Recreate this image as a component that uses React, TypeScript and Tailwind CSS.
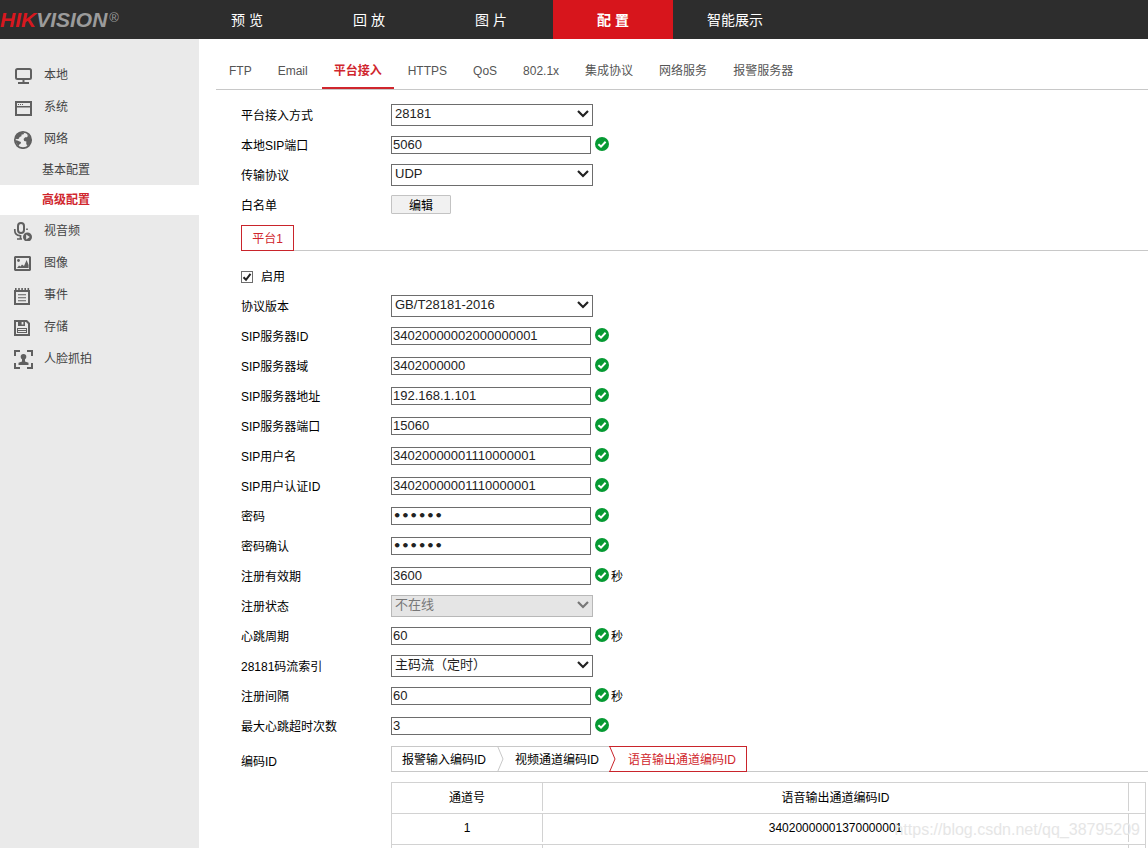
import { useState, type ReactNode } from "react";
import clsx from "clsx";

const navItems = ["预 览", "回 放", "图 片", "配 置", "智能展示"];

const tabs = [
  "FTP",
  "Email",
  "平台接入",
  "HTTPS",
  "QoS",
  "802.1x",
  "集成协议",
  "网络服务",
  "报警服务器",
];

const icons: Record<string, ReactNode> = {
  local: (
    <>
      <rect x="3" y="4" width="15" height="10" rx="1.5" fill="none" stroke="currentColor" strokeWidth="2" />
      <path d="M9.5 15h2v2h-2zM5 17h11v2H5z" />
    </>
  ),
  system: (
    <>
      <path d="M2 4h17v15H2zM4 6v3h13V6zM4 10.5V17h13v-6.5z" fillRule="evenodd" />
      <path d="M5 7h1v1H5zM7 7h1v1H7zM9 7h1v1H9z" />
    </>
  ),
  network: (
    <>
      <circle cx="10" cy="11" r="8.2" fill="none" stroke="currentColor" strokeWidth="1.7" />
      <path d="M3 7 5.5 3.8 9 2.8l2.2 1.4-1 1.2-1.6.2-.2 1.6-1.8.7-.8 1.8-2 .6-1.6-1zM2 11l2.4.4 2.2 1.2 1.4.4-.4 1.8-1.6 1-.2 1.4L3.6 15z" />
      <path d="M14 4.4 17.4 8l.8 3-1 3.8-3 2.2-1-2.4.2-2-2.2-.6-.6-2 1.6-1.8h1.8l.8-1.2z" />
    </>
  ),
  av: (
    <>
      <rect x="5" y="2" width="6" height="10" rx="3" fill="none" stroke="currentColor" strokeWidth="2" />
      <path d="M1.8 8v1.5c0 3 2.2 5 5.4 5.2M14 7.5v1.5M7.5 14v4M4 18h5" fill="none" stroke="currentColor" strokeWidth="1.7" />
      <circle cx="14.5" cy="16" r="4.5" />
      <path d="M13.2 13.6v4.8l3.6-2.4z" fill="#eaeaea" />
    </>
  ),
  image: (
    <>
      <path d="M2 3h15l1 1v13l-1 1H2l-1-1V4zM3 5v11h13V5z" fillRule="evenodd" />
      <circle cx="5.5" cy="7.5" r="1.4" />
      <path d="M4 15l2-2.5 1.5 1 1.5-2 2 1.5L13.6 7l2 5v3z" />
    </>
  ),
  event: (
    <>
      <path d="M1 5h16v15H1zM3 7v11h12V7z" fillRule="evenodd" />
      <path d="M2 3h1.6v2H2zM5.2 3h1.6v2H5.2zM8.3 3h1.6v2H8.3zM11.4 3H13v2h-1.6zM14.5 3h1.6v2h-1.6zM5 9.2h8v1H5zM5 12.2h8v1H5zM5 15.2h8v1H5z" />
    </>
  ),
  storage: (
    <>
      <path d="M1 3h13l3 3v13H1zM3 5v12h12V7l-2-2z" fillRule="evenodd" />
      <path d="M5 4h7v5H5zM8.6 5v2.6h1.8V5z" fillRule="evenodd" />
      <path d="M4 11h10v5H4zM5 12v1h8v-1zM5 14v1h8v-1z" fillRule="evenodd" />
    </>
  ),
  face: (
    <>
      <path d="M2 7V2h5M14 2h5v5M19 14v5h-5M7 19H2v-5" fill="none" stroke="currentColor" strokeWidth="2" />
      <circle cx="10.5" cy="7.8" r="2.8" />
      <path d="M9 9h3v3.5l3.5 1.3V16h-10v-2.2L9 12.5z" />
    </>
  ),
};

const sideItems = [
  { icon: "local", label: "本地" },
  { icon: "system", label: "系统" },
  { icon: "network", label: "网络", children: ["基本配置", "高级配置"] },
  { icon: "av", label: "视音频" },
  { icon: "image", label: "图像" },
  { icon: "event", label: "事件" },
  { icon: "storage", label: "存储" },
  { icon: "face", label: "人脸抓拍" },
];

type Field = {
  id: string;
  label: string;
  value: string;
  kind?: "select" | "password";
  disabled?: boolean;
  unit?: string;
};

const accessFields: Field[] = [
  { id: "mode", label: "平台接入方式", value: "28181", kind: "select" },
  { id: "localPort", label: "本地SIP端口", value: "5060" },
  { id: "transport", label: "传输协议", value: "UDP", kind: "select" },
];

const platformFields: Field[] = [
  { id: "version", label: "协议版本", value: "GB/T28181-2016", kind: "select" },
  { id: "serverId", label: "SIP服务器ID", value: "34020000002000000001" },
  { id: "serverDomain", label: "SIP服务器域", value: "3402000000" },
  { id: "serverAddr", label: "SIP服务器地址", value: "192.168.1.101" },
  { id: "serverPort", label: "SIP服务器端口", value: "15060" },
  { id: "user", label: "SIP用户名", value: "34020000001110000001" },
  { id: "authId", label: "SIP用户认证ID", value: "34020000001110000001" },
  { id: "password", label: "密码", value: "123456", kind: "password" },
  { id: "confirm", label: "密码确认", value: "123456", kind: "password" },
  { id: "expires", label: "注册有效期", value: "3600", unit: "秒" },
  { id: "status", label: "注册状态", value: "不在线", kind: "select", disabled: true },
  { id: "heartbeat", label: "心跳周期", value: "60", unit: "秒" },
  { id: "stream", label: "28181码流索引", value: "主码流（定时）", kind: "select" },
  { id: "interval", label: "注册间隔", value: "60", unit: "秒" },
  { id: "maxTimeout", label: "最大心跳超时次数", value: "3" },
];

function ValidMark() {
  return (
    <svg className="mb-0.5 ml-1 size-3.5 shrink-0" viewBox="0 0 14 14" aria-hidden="true">
      <circle cx="7" cy="7" r="7" fill="#069a33" />
      <path d="M3.4 7.2 6 9.6l4.6-4.8" fill="none" stroke="#fff" strokeWidth="2" />
    </svg>
  );
}

function SelectBox({ field }: { field: Field }) {
  return (
    <div className="relative">
      <select
        id={field.id}
        disabled={field.disabled}
        defaultValue={field.value}
        className={clsx(
          "block h-[22px] w-[202px] appearance-none rounded-none border pr-5 pb-0.5 pl-[3px] text-[13px] leading-[18px] opacity-100",
          field.disabled
            ? "border-[#b8b8b8] bg-[#e5e5e5] text-[#777]"
            : "border-[#6d6d6d] bg-white text-[#222]",
        )}
      >
        <option>{field.value}</option>
      </select>
      <svg
        className={clsx(
          "pointer-events-none absolute top-1.5 right-1 h-2 w-3",
          field.disabled ? "text-[#777]" : "text-[#222]",
        )}
        viewBox="0 0 12 8"
        aria-hidden="true"
      >
        <path d="M1 1l5 5 5-5" fill="none" stroke="currentColor" strokeWidth="2.2" />
      </svg>
    </div>
  );
}

function FieldRow({ field }: { field: Field }) {
  return (
    <div className="flex h-[30px] items-center">
      <label htmlFor={field.id} className="w-[150px] shrink-0 pt-0.5">
        {field.label}
      </label>
      {field.kind === "select" ? (
        <SelectBox field={field} />
      ) : (
        <>
          <input
            id={field.id}
            type={field.kind ?? "text"}
            defaultValue={field.value}
            className={clsx(
              "block h-[18px] w-[200px] border border-[#6d6d6d] bg-white px-px pb-0.5 text-[13px] text-[#222]",
              field.kind === "password" && "font-['DejaVu_Sans',sans-serif] font-bold",
            )}
          />
          <ValidMark />
          {field.unit && <span className="ml-0.5 pt-0.5">{field.unit}</span>}
        </>
      )}
    </div>
  );
}

function TabArrow({ active }: { active?: boolean }) {
  return (
    <svg className="h-[26px] w-[7px] shrink-0" viewBox="0 0 7 26" aria-hidden="true">
      {active ? (
        <path d="M7 .5H0M7 25.5H0" stroke="#c9242b" />
      ) : (
        <path d="M0 .5h7M0 25.5h7" stroke="#c8c8c8" />
      )}
      <path
        d="M.5 0 6 13 .5 26"
        fill="none"
        stroke={active ? "#c9242b" : "#c8c8c8"}
      />
    </svg>
  );
}

function Header() {
  return (
    <header className="flex h-[39px] shrink-0 bg-[#2d2d2d]">
      <a href="#home" className="flex w-[187px] items-center text-[21px] leading-none font-bold text-[#9b9b9b] italic">
        <span className="text-[#d7181f]">HIK</span>VISION
        <span className="ml-0.5 pb-1 text-[13px] font-normal not-italic">®</span>
      </a>
      <nav aria-label="主菜单" className="flex gap-0.5 text-[14px] text-white">
        {navItems.map((item) => (
          <a
            key={item}
            href="#nav"
            className={clsx(
              "flex w-[120px] items-center justify-center",
              item === "配 置" && "bg-[#d7151c] font-bold",
            )}
          >
            {item}
          </a>
        ))}
      </nav>
    </header>
  );
}

function Sidebar() {
  return (
    <aside className="w-[199px] shrink-0 bg-[#eaeaea] pt-5 text-[#444]">
      <ul>
        {sideItems.map((item) => (
          <li key={item.label}>
            <a href="#side" className="flex h-8 items-center gap-[11px] pl-[13px]">
              <svg className="size-5 text-[#606060]" viewBox="0 0 20 20" fill="currentColor" aria-hidden="true">
                {icons[item.icon]}
              </svg>
              {item.label}
            </a>
            {item.children?.map((child) => (
              <a
                key={child}
                href="#sub"
                className={clsx(
                  "flex h-[30px] items-center pl-[42px]",
                  child === "高级配置" && "bg-white font-bold text-[#d0262d]",
                )}
              >
                {child}
              </a>
            ))}
          </li>
        ))}
      </ul>
    </aside>
  );
}

function ChannelTable() {
  const cell = "h-[31px] border-b border-[#d2d2d2] p-0 pb-[2px] font-normal";
  const inner = "flex h-7 items-center justify-center border-r border-[#d2d2d2]";
  const rows = [
    ["1", "34020000001370000001"],
    ["", ""],
  ];
  return (
    <table className="w-full table-fixed border-separate border-spacing-0 border-t border-r border-l border-[#d2d2d2] text-center">
      <colgroup>
        <col className="w-[151px]" />
        <col />
        <col className="w-4" />
      </colgroup>
      <thead>
        <tr>
          <th className={cell}><div className={clsx(inner, "pt-0.5")}>通道号</div></th>
          <th className={cell}><div className={clsx(inner, "pt-0.5")}>语音输出通道编码ID</div></th>
          <th className={cell} />
        </tr>
      </thead>
      <tbody>
        {rows.map(([channel, code], i) => (
          <tr key={i}>
            <td className={cell}><div className={inner}>{channel}</div></td>
            <td className={cell}><div className={inner}>{code}</div></td>
            <td className={cell} />
          </tr>
        ))}
      </tbody>
    </table>
  );
}

export default function App() {
  const [enabled, setEnabled] = useState(true);

  return (
    <div className="relative flex h-screen flex-col overflow-hidden bg-white font-['Liberation_Sans','Noto_Sans_CJK_SC',sans-serif] text-[12px] leading-4 text-black">
      <Header />
      <div className="flex min-h-0 flex-1">
        <Sidebar />
        <main className="min-w-0 flex-1 pl-[17px]">
          <nav aria-label="网络高级配置" className="flex gap-0.5 border-b border-[#c8c8c8] pt-[13px] pl-px text-[#555]">
            {tabs.map((tab) => (
              <a
                key={tab}
                href="#tab"
                className={clsx(
                  "flex h-[37px] items-center border-b-2 px-3 pt-0.5",
                  tab === "平台接入"
                    ? "border-[#d0262d] font-bold text-[#d0262d]"
                    : "border-transparent",
                )}
              >
                {tab}
              </a>
            ))}
          </nav>

          <form className="pt-2.5 pl-[25px]">
            {accessFields.map((field) => (
              <FieldRow key={field.id} field={field} />
            ))}
            <div className="flex h-[30px] items-center">
              <span className="w-[150px] pt-0.5">白名单</span>
              <button type="button" className="mb-0.5 h-[19px] w-[60px] rounded-[1px] border border-[#c3c3c3] bg-[#f1f1f1] pt-0.5">
                编辑
              </button>
            </div>

            <div className="mt-[5px] flex h-[26px] border-b border-[#c8c8c8]">
              <button type="button" className="h-[26px] w-[53px] shrink-0 border border-[#c9242b] pt-0.5 text-[#d0262d]">
                平台1
              </button>
            </div>

            <div className="mt-3 flex h-7 items-center">
              <label className="flex items-center gap-2">
                <span className="relative size-3">
                  <input
                    type="checkbox"
                    checked={enabled}
                    onChange={(e) => setEnabled(e.target.checked)}
                    className="block size-3 appearance-none border border-[#6d6d6d] bg-white"
                  />
                  {enabled && (
                    <svg className="pointer-events-none absolute inset-0 size-3" viewBox="0 0 12 12" aria-hidden="true">
                      <path d="M2.5 6.3 5 8.8l4.5-6" fill="none" stroke="#222" strokeWidth="2" />
                    </svg>
                  )}
                </span>
                启用
              </label>
            </div>

            {platformFields.map((field) => (
              <FieldRow key={field.id} field={field} />
            ))}

            <div className="flex pt-[5px]">
              <span className="w-[150px] shrink-0 pt-2">编码ID</span>
              <div className="min-w-0 flex-1">
                <div className="flex h-[26px] border-b border-[#c8c8c8]">
                  <button type="button" className="h-[26px] shrink-0 border-y border-l border-[#c8c8c8] pt-0.5 pr-[11px] pl-2.5">
                    报警输入编码ID
                  </button>
                  <TabArrow />
                  <button type="button" className="h-[26px] shrink-0 border-y border-[#c8c8c8] pt-0.5 pr-2.5 pl-[11px]">
                    视频通道编码ID
                  </button>
                  <TabArrow active />
                  <button type="button" className="h-[26px] shrink-0 border-y border-r border-[#c9242b] pt-0.5 pr-2.5 pl-3 text-[#d0262d]">
                    语音输出通道编码ID
                  </button>
                </div>
                <div className="pt-2.5 pr-0.5">
                  <ChannelTable />
                </div>
              </div>
            </div>
          </form>
        </main>
      </div>
      <p className="pointer-events-none absolute right-2 bottom-2 text-[16px] leading-5 text-[#e6e6e6]">
        https://blog.csdn.net/qq_38795209
      </p>
    </div>
  );
}
